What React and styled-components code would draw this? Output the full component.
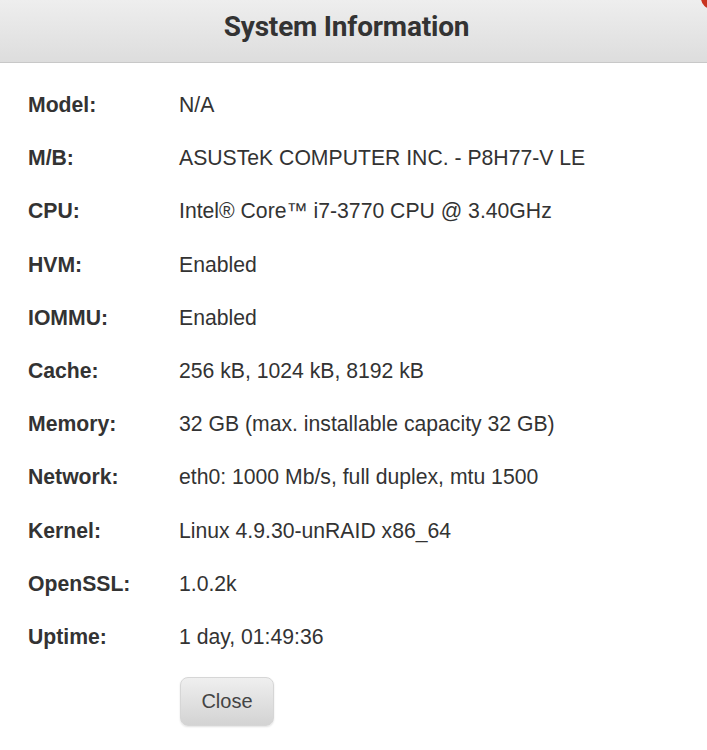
import React from "react";
import styled, { createGlobalStyle } from "styled-components";

const GlobalStyle = createGlobalStyle`
  html, body {
    margin: 0;
    padding: 0;
    background: #ffffff;
  }
  body {
    font-family: "Liberation Sans", Arial, sans-serif;
  }
`;

const info = [
  ["Model:", "N/A"],
  ["M/B:", "ASUSTeK COMPUTER INC. - P8H77-V LE"],
  ["CPU:", "Intel® Core™ i7-3770 CPU @ 3.40GHz"],
  ["HVM:", "Enabled"],
  ["IOMMU:", "Enabled"],
  ["Cache:", "256 kB, 1024 kB, 8192 kB"],
  ["Memory:", "32 GB (max. installable capacity 32 GB)"],
  ["Network:", "eth0: 1000 Mb/s, full duplex, mtu 1500"],
  ["Kernel:", "Linux 4.9.30-unRAID x86_64"],
  ["OpenSSL:", "1.0.2k"],
  ["Uptime:", "1 day, 01:49:36"],
];

function App() {
  return (
    <Dialog>
      <GlobalStyle />
      <Header>
        <Title>System Information</Title>
        <CloseDot />
      </Header>
      <Body>
        {info.map(([label, value]) => (
          <Row key={label}>
            <Label>{label}</Label>
            <Value>{value}</Value>
          </Row>
        ))}
        <Actions>
          <CloseButton type="button">Close</CloseButton>
        </Actions>
      </Body>
    </Dialog>
  );
}

export default App;

const Dialog = styled.div`
  width: 707px;
  height: 750px;
  overflow: hidden;
  background: #fff;
`;

const Header = styled.div`
  position: relative;
  height: 62px;
  display: flex;
  align-items: center;
  justify-content: center;
  padding-right: 14px;
  background: linear-gradient(to bottom, #eeeeee, #dddddd);
  border-bottom: 1px solid #c8c8c8;
`;

const Title = styled.h1`
  margin: 0 0 10px;
  font-family: Roboto, "Liberation Sans", sans-serif;
  font-size: 28px;
  font-weight: 700;
  color: #333333;
  letter-spacing: -0.2px;
`;

const CloseDot = styled.span`
  position: absolute;
  top: -13px;
  right: -16px;
  width: 22px;
  height: 22px;
  border-radius: 50%;
  background: #c8331f;
`;

const Body = styled.div`
  padding: 26px 0 0 28px;
`;

const Row = styled.div`
  display: flex;
  height: 53.2px;
  align-items: flex-start;
  font-size: 21.2px;
  line-height: 31px;
  color: #333333;
`;

const Label = styled.div`
  width: 151px;
  font-weight: 700;
`;

const Value = styled.div`
  font-weight: 400;
`;

const Actions = styled.div`
  padding: 3px 0 0 152px;
`;

const CloseButton = styled.button`
  width: 94px;
  height: 49px;
  border: 1px solid #d6d6d6;
  border-radius: 8px;
  background: linear-gradient(to bottom, #efefef, #d3d3d3);
  box-shadow: 0 1px 2px rgba(0, 0, 0, 0.12);
  font-family: "Liberation Sans", Arial, sans-serif;
  font-size: 20px;
  color: #444444;
  cursor: pointer;
`;
